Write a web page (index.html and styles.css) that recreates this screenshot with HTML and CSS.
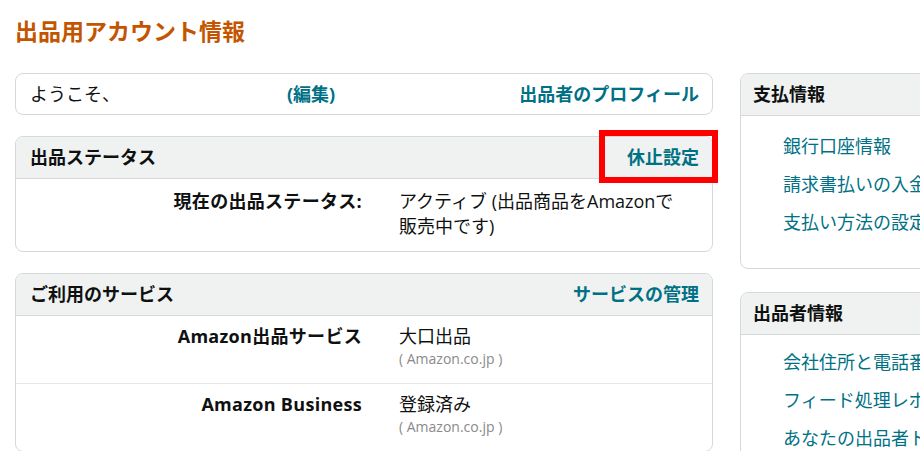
FILE: index.html
```html
<!DOCTYPE html>
<html lang="ja">

<head>
    <meta charset="UTF-8">
    <meta name="viewport" content="width=device-width, initial-scale=1.0">
    <title>出品用アカウント情報</title>
    <link rel="stylesheet" href="styles.css">
</head>

<body>
    <h1 class="page-title">出品用アカウント情報</h1>

    <div class="columns">
        <div class="main-col">

            <div class="box welcome">
                <span class="greeting">ようこそ、</span>
                <a href="#" class="link bold">(編集)</a>
                <a href="#" class="link bold push">出品者のプロフィール</a>
            </div>

            <div class="box">
                <div class="box-head">
                    <span>出品ステータス</span>
                    <a href="#" class="link bold">休止設定</a>
                    <span class="highlight"></span>
                </div>
                <div class="row status-row">
                    <div class="label">現在の出品ステータス:</div>
                    <div class="value">アクティブ (出品商品をAmazonで販売中です)</div>
                </div>
            </div>

            <div class="box">
                <div class="box-head">
                    <span>ご利用のサービス</span>
                    <a href="#" class="link bold">サービスの管理</a>
                </div>
                <div class="row">
                    <div class="label">Amazon出品サービス</div>
                    <div class="value">
                        大口出品
                        <div class="market">( Amazon.co.jp )</div>
                    </div>
                </div>
                <div class="row">
                    <div class="label">Amazon Business</div>
                    <div class="value">
                        登録済み
                        <div class="market">( Amazon.co.jp )</div>
                    </div>
                </div>
            </div>

        </div>

        <div class="side-col">
            <div class="box">
                <div class="box-head side-head">支払情報</div>
                <ul class="side-links">
                    <li><a href="#" class="link">銀行口座情報</a></li>
                    <li><a href="#" class="link">請求書払いの入金先の設定</a></li>
                    <li><a href="#" class="link">支払い方法の設定</a></li>
                </ul>
            </div>

            <div class="box">
                <div class="box-head side-head">出品者情報</div>
                <ul class="side-links seller-links">
                    <li><a href="#" class="link">会社住所と電話番号</a></li>
                    <li><a href="#" class="link">フィード処理レポート</a></li>
                    <li><a href="#" class="link">あなたの出品者トークン</a></li>
                </ul>
            </div>
        </div>
    </div>
</body>

</html>
```

FILE: styles.css
```css
html, body {
    overflow: hidden;
}

body {
    margin: 0;
    padding: 0 15px;
    width: 1100px;
    background: #fff;
    color: #0f1111;
    font-family: "Open Sans", "Noto Sans CJK JP", sans-serif;
    font-size: 18px;
    line-height: 25px;
}

.page-title {
    margin: 0;
    padding-top: 17px;
    height: 73px;
    box-sizing: border-box;
    font-size: 23px;
    line-height: 28px;
    font-weight: bold;
    color: #c45500;
}

.columns {
    display: flex;
    align-items: flex-start;
    gap: 27px;
}

.main-col {
    width: 698px;
    display: flex;
    flex-direction: column;
    gap: 21px;
}

.side-col {
    width: 300px;
    display: flex;
    flex-direction: column;
    gap: 23px;
}

.box {
    border: 1px solid #d5d9d9;
    border-radius: 8px;
    background: #fff;
}

.link {
    color: #007185;
    text-decoration: none;
}

.bold {
    font-weight: bold;
}

/* welcome bar */
.welcome {
    display: flex;
    align-items: center;
    height: 42px;
    box-sizing: border-box;
    padding: 0 13px 0 14px;
}

.greeting {
    width: 257px;
}

.push {
    margin-left: auto;
}

/* box header */
.box-head {
    position: relative;
    display: flex;
    justify-content: space-between;
    align-items: center;
    height: 41px;
    padding: 0 13px 0 14px;
    background: #f0f2f2;
    border-bottom: 1px solid #d5d9d9;
    border-radius: 8px 8px 0 0;
    font-weight: bold;
}

.highlight {
    position: absolute;
    right: -6px;
    top: -7px;
    width: 119px;
    height: 53px;
    border: 6px solid #ff0000;
    box-sizing: border-box;
}

/* label / value rows */
.row {
    display: grid;
    grid-template-columns: 346px 1fr;
    column-gap: 37px;
    padding: 8px 30px 14px 0;
    border-top: 1px solid #e7e7e7;
}

.box-head + .row {
    border-top: none;
}

.status-row {
    padding-top: 10px;
    padding-bottom: 12px;
}

.label {
    text-align: right;
    font-weight: bold;
    letter-spacing: 0.3px;
}

.market {
    font-size: 14px;
    line-height: 20px;
    color: #8a8a8a;
}

/* side links */
.side-head {
    padding-left: 12px;
}

.side-links {
    list-style: none;
    margin: 0;
    padding: 11px 0 27px 42px;
}

.seller-links {
    padding-top: 8px;
}

.side-links li {
    line-height: 38px;
    white-space: nowrap;
}
```
